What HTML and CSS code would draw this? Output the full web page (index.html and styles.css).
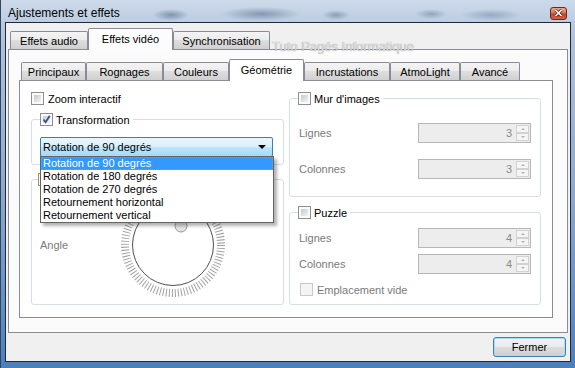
FILE: index.html
```html
<!DOCTYPE html>
<html lang="fr">
<head>
    <meta charset="UTF-8">
    <meta name="viewport" content="width=device-width, initial-scale=1.0">
    <title>Ajustements et effets</title>
    <link rel="stylesheet" href="styles.css">
</head>
<body>
<div class="window">
    <!-- Title bar -->
    <div class="titlebar">
        <span class="title">Ajustements et effets</span>
        <span class="close-btn">
            <svg width="9" height="8" viewBox="0 0 9 8"><path d="M1.5 1 L7.5 7 M7.5 1 L1.5 7" stroke="#5a1a10" stroke-width="3"/><path d="M1.5 1 L7.5 7 M7.5 1 L1.5 7" stroke="#fff" stroke-width="1.6"/></svg>
        </span>
    </div>

    <div class="client">
        <!-- Outer tabs -->
        <div class="tab-bar outer-bar">
            <span class="tab" style="width:78px">Effets audio</span>
            <span class="tab active" style="width:85px">Effets vidéo</span>
            <span class="tab" style="width:97px">Synchronisation</span>
        </div>
        <div class="pane outer-pane">
            <!-- Inner tabs -->
            <div class="tab-bar inner-bar">
                <span class="tab" style="width:65px">Principaux</span>
                <span class="tab" style="width:77px">Rognages</span>
                <span class="tab" style="width:66px">Couleurs</span>
                <span class="tab active" style="width:75px">Géométrie</span>
                <span class="tab" style="width:86px">Incrustations</span>
                <span class="tab" style="width:70px">AtmoLight</span>
                <span class="tab" style="width:60px">Avancé</span>
            </div>
            <div class="pane inner-pane">
                <div class="columns">
                    <div class="col left-col">
                        <div class="check-row">
                            <span class="check"></span>
                            <span>Zoom interactif</span>
                        </div>

                        <fieldset class="group transform-group">
                            <legend>
                                <span class="check checked"><svg width="13" height="13" viewBox="0 0 13 13"><path d="M3.5 6.5 L5.6 9.2 L9.8 2.8" fill="none" stroke="#3a4f8c" stroke-width="1.8"/></svg></span>
                                <span>Transformation</span>
                            </legend>
                            <div class="combo">
                                <span>Rotation de 90 degrés</span>
                                <span class="combo-arrow"></span>
                            </div>
                        </fieldset>

                        <fieldset class="group rotation-group">
                            <legend>
                                <span class="check"></span>
                            </legend>
                            <div class="angle-row">
                                <span class="angle-label">Angle</span>
                                <svg class="dial" width="108" height="108" viewBox="0 0 108 108">
                                    <circle cx="54" cy="54" r="48" fill="none" stroke="#a2a2a2" stroke-width="8" stroke-dasharray="1 2.016"/>
                                    <circle cx="54" cy="54" r="40.5" fill="#fff" stroke="#505050" stroke-width="1"/>
                                    <circle cx="62" cy="35" r="6" fill="#e4e4e4" stroke="#9a9a9a"/>
                                </svg>
                            </div>
                        </fieldset>

                        <!-- Open combo list -->
                        <ul class="combo-list">
                            <li class="selected">Rotation de 90 degrés</li>
                            <li>Rotation de 180 degrés</li>
                            <li>Rotation de 270 degrés</li>
                            <li>Retournement horizontal</li>
                            <li>Retournement vertical</li>
                        </ul>
                    </div>

                    <div class="col right-col">
                        <fieldset class="group wall-group">
                            <legend>
                                <span class="check"></span>
                                <span>Mur d'images</span>
                            </legend>
                            <div class="spin-row">
                                <span class="muted">Lignes</span>
                                <div class="spin"><span class="spin-value">3</span><span class="spin-btns"><span class="spin-up"></span><span class="spin-down"></span></span></div>
                            </div>
                            <div class="spin-row wall-second">
                                <span class="muted">Colonnes</span>
                                <div class="spin"><span class="spin-value">3</span><span class="spin-btns"><span class="spin-up"></span><span class="spin-down"></span></span></div>
                            </div>
                        </fieldset>

                        <fieldset class="group puzzle-group">
                            <legend>
                                <span class="check"></span>
                                <span>Puzzle</span>
                            </legend>
                            <div class="spin-row">
                                <span class="muted">Lignes</span>
                                <div class="spin"><span class="spin-value">4</span><span class="spin-btns"><span class="spin-up"></span><span class="spin-down"></span></span></div>
                            </div>
                            <div class="spin-row puzzle-second">
                                <span class="muted">Colonnes</span>
                                <div class="spin"><span class="spin-value">4</span><span class="spin-btns"><span class="spin-up"></span><span class="spin-down"></span></span></div>
                            </div>
                            <div class="check-row empty-row">
                                <span class="check disabled"></span>
                                <span class="muted">Emplacement vide</span>
                            </div>
                        </fieldset>
                    </div>
                </div>
            </div>
        </div>

        <div class="footer">
            <button class="btn">Fermer</button>
        </div>
    </div>

    <div class="watermark">Tuto Pagés Informatique</div>
</div>
</body>
</html>
```
FILE: styles.css
```css
/* General */
* {
    box-sizing: border-box;
}
body {
    margin: 0;
    font-family: "Liberation Sans", Arial, sans-serif;
    font-size: 11px;
    color: #000;
    background: #6d8fb8;
}

/* Window frame */
.window {
    position: relative;
    width: 575px;
    height: 368px;
    padding: 0 4px 6px 4px;
    display: flex;
    flex-direction: column;
    border-left: 1px solid #34465e;
    background: linear-gradient(180deg, #c4d3e5 0%, #aec1d9 12%, #8aa7cc 55%, #4a7fbd 100%);
}
.titlebar {
    height: 22px;
    flex: none;
    display: flex;
    align-items: center;
    justify-content: space-between;
    margin: 0 -4px;
    padding: 4px 8px 0 7px;
    background:
        radial-gradient(ellipse 18px 6px at 170px 15px, rgba(70, 95, 130, 0.55), transparent),
        radial-gradient(ellipse 40px 7px at 260px 14px, rgba(70, 95, 130, 0.5), transparent),
        radial-gradient(ellipse 14px 5px at 335px 15px, rgba(70, 95, 130, 0.45), transparent),
        radial-gradient(ellipse 16px 5px at 430px 14px, rgba(70, 95, 130, 0.4), transparent),
        radial-gradient(ellipse 30px 6px at 490px 15px, rgba(70, 95, 130, 0.35), transparent),
        linear-gradient(180deg, #cddaea, #bccde2);
}
.title {
    font-size: 12px;
    color: #000;
}
.close-btn {
    width: 17px;
    height: 13px;
    display: flex;
    align-items: center;
    justify-content: center;
    border: 1px solid #6a2a1f;
    border-radius: 3px;
    background: linear-gradient(180deg, #eba992 0%, #d9745a 45%, #c2412a 55%, #d9603f 100%);
}

/* Client area */
.client {
    flex: 1;
    display: flex;
    flex-direction: column;
    padding: 5px 2px 0 2px;
    border: 1px solid #1f2a38;
    background: #f0f0f0;
}

/* Tabs */
.tab-bar {
    height: 21px;
    flex: none;
    display: flex;
    align-items: flex-end;
    padding-left: 2px;
}
.tab {
    height: 18px;
    display: flex;
    align-items: center;
    justify-content: center;
    border: 1px solid #898c95;
    border-bottom: none;
    border-radius: 2px 2px 0 0;
    background: linear-gradient(180deg, #f4f4f4 0%, #ebebeb 50%, #dedede 50%, #d0d0d0 100%);
    white-space: nowrap;
}
.tab.active {
    position: relative;
    z-index: 1;
    height: 22px;
    margin-bottom: -1px;
    padding-bottom: 2px;
    background: #fcfcfc;
}
.pane {
    border: 1px solid #898c95;
}
.outer-pane {
    height: 284px;
    padding: 9px 14px 14px 10px;
    background: #fbfbfb;
}
.inner-pane {
    height: 238px;
    padding: 11px 11px 0 11px;
    background: #fff;
}
.inner-bar .tab.active {
    background: #fff;
}

/* Columns */
.columns {
    display: grid;
    grid-template-columns: 253px 252px;
    column-gap: 5px;
}
.col {
    position: relative;
    display: flex;
    flex-direction: column;
}

/* Check boxes */
.check-row {
    display: flex;
    align-items: center;
    gap: 4px;
    height: 13px;
}
.check {
    position: relative;
    width: 13px;
    height: 13px;
    flex: none;
    padding: 2px;
    border: 1px solid #8e8f8f;
    background: linear-gradient(135deg, #c6c9ce, #f3f3f3) content-box, #fafafa;
}
.check svg {
    position: absolute;
    left: -1px;
    top: -1px;
}
.check.disabled {
    border-color: #c9c9c9;
    background: #f4f4f4;
}
.muted {
    color: #7a7a7a;
}

/* Group boxes */
.group {
    margin: 0;
    padding: 0 8px;
    min-width: 0;
    border: 1px solid #d5dfe5;
    border-radius: 3px;
}
.group legend {
    display: flex;
    align-items: center;
    gap: 3px;
    height: 13px;
    padding: 0 3px 0 0;
}
.transform-group {
    margin-top: 8px;
    padding-top: 11px;
    padding-bottom: 7px;
}
.rotation-group {
    margin-top: 8px;
    padding-top: 5px;
    padding-bottom: 5px;
}
.rotation-group legend {
    margin-left: -2px;
}
.wall-group {
    padding: 18px 9px 17px 9px;
}
.puzzle-group {
    margin-top: 9px;
    padding: 9px 9px 8px 9px;
}
.wall-group legend, .puzzle-group legend {
    margin-left: -1px;
}

/* Combo box */
.combo {
    width: 233px;
    height: 20px;
    display: flex;
    align-items: center;
    justify-content: space-between;
    padding: 0 6px 0 2px;
    border: 1px solid #3c7fb1;
    border-radius: 2px;
    background: linear-gradient(180deg, #eaf6fd 0%, #d9f0fc 50%, #bee6fd 50%, #a7d9f5 100%);
}
.combo-arrow {
    width: 0;
    height: 0;
    border-left: 4px solid transparent;
    border-right: 4px solid transparent;
    border-top: 4px solid #000;
}
.combo-list {
    position: absolute;
    left: 9px;
    top: 64px;
    z-index: 2;
    width: 234px;
    margin: 0;
    padding: 0;
    list-style: none;
    border: 1px solid #646464;
    background: #fff;
    box-shadow: 3px 3px 3px rgba(0, 0, 0, 0.3);
}
.combo-list li {
    height: 13px;
    line-height: 12px;
    padding-left: 2px;
    white-space: nowrap;
}
.combo-list li.selected {
    background: #3399ff;
    color: #fff;
    border: 1px dotted #e0853a;
    padding-left: 1px;
    line-height: 11px;
}

/* Angle dial */
.angle-row {
    display: flex;
    align-items: center;
}
.angle-label {
    width: 79px;
    color: #7a7a7a;
}
.dial {
    display: block;
}

/* Spin boxes */
.spin-row {
    display: flex;
    align-items: center;
    justify-content: space-between;
    height: 20px;
}
.wall-second {
    margin-top: 16px;
}
.puzzle-second {
    margin-top: 6px;
}
.empty-row {
    margin-top: 9px;
    padding-left: 1px;
}
.spin {
    width: 113px;
    height: 20px;
    display: flex;
    border: 1px solid #b7b7b7;
    background: #ededed;
}
.spin-value {
    flex: 1;
    text-align: right;
    padding-right: 4px;
    line-height: 18px;
    color: #8a8a8a;
}
.spin-btns {
    width: 14px;
    display: flex;
    flex-direction: column;
    padding: 1px 1px 1px 0;
}
.spin-up, .spin-down {
    flex: 1;
    display: flex;
    align-items: center;
    justify-content: center;
    border: 1px solid #d2d2d2;
    background: #f5f5f5;
}
.spin-up::after, .spin-down::after {
    content: "";
    border-left: 2px solid transparent;
    border-right: 2px solid transparent;
}
.spin-up::after {
    border-bottom: 2px solid #b0b0b0;
}
.spin-down::after {
    border-top: 2px solid #b0b0b0;
}

/* Footer */
.footer {
    flex: 1;
    display: flex;
    justify-content: flex-end;
    padding: 4px 2px 4px 0;
}
.btn {
    width: 73px;
    height: 20px;
    padding: 0;
    font: inherit;
    color: #000;
    border: 1px solid #3c7fb1;
    border-radius: 3px;
    background: linear-gradient(180deg, #f2f2f2 0%, #ebebeb 50%, #dddddd 50%, #cfcfcf 100%);
    box-shadow: inset 0 0 0 1px #a6def7;
}

/* Watermark over the tabs */
.watermark {
    position: absolute;
    left: 271px;
    top: 39px;
    font-size: 13px;
    color: #dedede;
    text-shadow: 0 0 1px #8a8a8a;
    pointer-events: none;
}
```
